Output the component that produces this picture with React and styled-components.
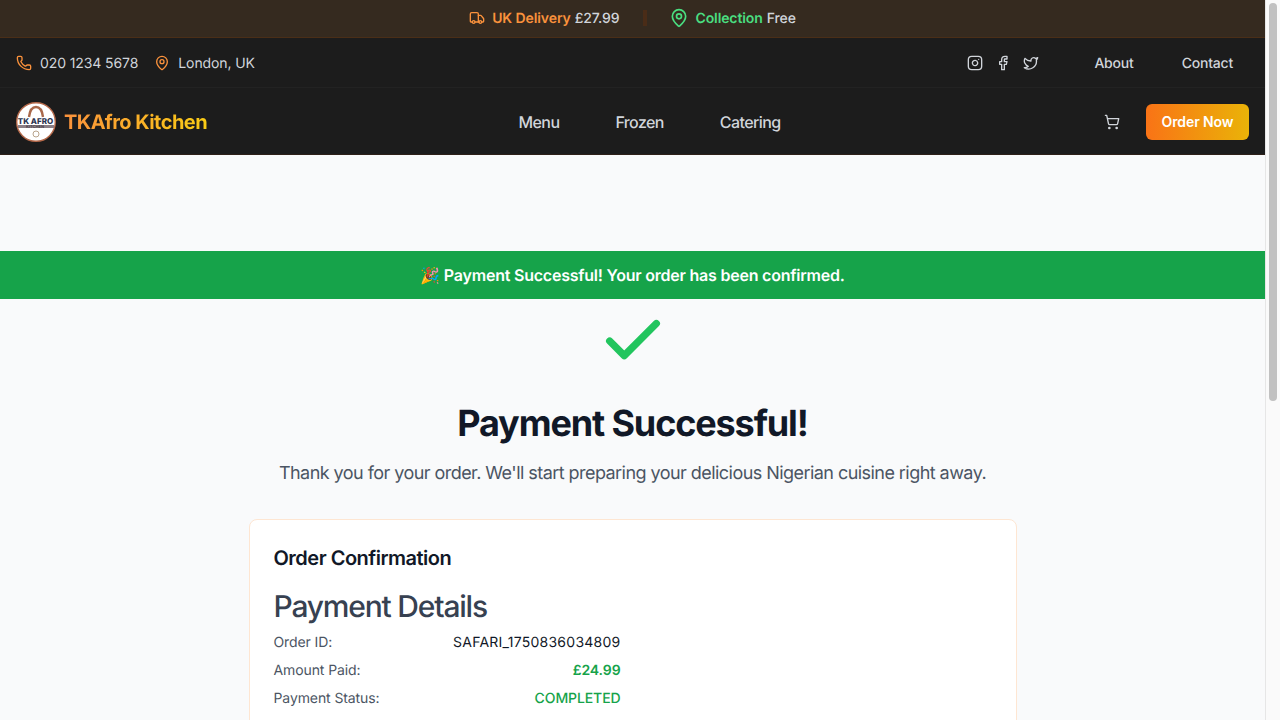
import React from "react";
import styled, { createGlobalStyle } from "styled-components";
import { Truck, MapPin, Phone, Instagram, Facebook, Twitter, ShoppingCart, Check } from "lucide-react";

const Global = createGlobalStyle`
  html, body { margin: 0; padding: 0; background: #f9fafb; }
  body { font-family: Inter, "Noto Sans", sans-serif; color: #111827; text-rendering: geometricPrecision; }
  * { box-sizing: border-box; }
`;

const Page = styled.div`width: 1265px; min-height: 1290px; display: flex; flex-direction: column;`;
const ScrollTrack = styled.div`
  position: fixed; top: 0; right: 0; bottom: 0; width: 15px; background: #fafafa; border-left: 1px solid #e6e6e6;
`;
const ScrollThumb = styled.div`
  position: absolute; top: 3px; left: 3px; width: 8px; height: 398px; border-radius: 4px; background: #c1c1c1;
`;
const PromoBar = styled.div`
  height: 38px; padding-bottom: 1px; display: flex; align-items: center; justify-content: center;
  background: #352a1f; border-bottom: 1px solid #4a2e17; font-size: 14px; letter-spacing: -0.1px; color: #d1d5db;
`;
const Promo = styled.div`display: flex; align-items: center; gap: ${p => p.$gap}px; font-weight: 500;`;
const PromoLabel = styled.strong`font-weight: 600; color: ${p => p.$c}; margin-right: 4px;`;
const PromoDivider = styled.span`width: 4px; height: 16px; margin: 0 22px 0 24px; background: #4a2c17;`;
const UtilityRow = styled.div`
  height: 50px; padding: 1px 16px 0; background: #1c1c1c; border-bottom: 1px solid #222;
  display: flex; align-items: center; justify-content: space-between;
  font-size: 14px; letter-spacing: -0.1px; color: #d1d5db; font-weight: 400;
`;
const Group = styled.div`display: flex; align-items: center; gap: ${p => p.$gap ?? 16}px;`;
const Item = styled.span`display: flex; align-items: center; gap: 8px;`;
const UtilLink = styled.a`padding: 0 16px; font-weight: 500; letter-spacing: -0.2px;`;
const Socials = styled(Group)`margin-right: 39px;`;
const NavRow = styled.nav`
  height: 67px; padding: 1px 16px 0; background: #1c1c1c; border-bottom: 1px solid #2e2018;
  display: flex; align-items: center; justify-content: space-between;
`;
const Brand = styled.div`display: flex; align-items: center; gap: 8px;`;
const Logo = styled.svg`width: 40px; height: 40px; display: block;`;
const BrandName = styled.span`
  font-size: 20px; font-weight: 700; letter-spacing: -0.55px; background: linear-gradient(90deg, #fb923c, #facc15);
  -webkit-background-clip: text; background-clip: text; color: transparent;
`;
const NavLinks = styled.div`display: flex; gap: 56px; margin-right: 4px;`;
const NavLink = styled.a`font-size: 16px; letter-spacing: -0.6px; font-weight: 500; color: #d1d5db;`;
const NavActions = styled.div`display: flex; align-items: center; gap: 18px;`;
const CartButton = styled.button`
  width: 32px; height: 32px; display: flex; align-items: center; justify-content: center;
  border: 0; background: none; color: #d1d5db; padding: 0;
`;
const OrderButton = styled.button`
  width: 103px; height: 36px; border: 0; border-radius: 6px; color: #fff; font: 600 14px Inter, sans-serif;
  letter-spacing: -0.1px; background: linear-gradient(90deg, #f97316, #eab308);
`;
const Main = styled.main`padding-top: 96px; display: flex; flex-direction: column; align-items: center;`;
const Banner = styled.div`
  align-self: stretch; height: 48px; background: #16a34a; color: #fff; font-size: 16px; letter-spacing: -0.22px; font-weight: 600;
  display: flex; align-items: center; justify-content: center;
`;
const CheckWrap = styled.div`margin-top: 7px; height: 70px; color: #22c55e; display: flex;`;
const Title = styled.h1`margin: 27px 0 0; font-size: 36px; line-height: 40px; letter-spacing: -1.13px; font-weight: 700; color: #111827;`;
const Subtitle = styled.p`margin: 17px 0 0; font-size: 18px; line-height: 28px; letter-spacing: -0.55px; color: #4b5563;`;
const Card = styled.section`
  width: 768px; margin-top: 31px; padding: 24px; background: #fff; border: 1px solid #fee6d2;
  border-radius: 8px; min-height: 620px;
`;
const CardTitle = styled.h3`margin: 0; font-size: 20px; line-height: 28px; letter-spacing: -0.5px; font-weight: 600; color: #111827;`;
const SectionTitle = styled.h2`margin: 15px 0 0; font-size: 30px; line-height: 40px; letter-spacing: -1.2px; font-weight: 500; color: #374151;`;
const Details = styled.div`width: 347px; margin-top: 1px;`;
const Row = styled.div`height: 28px; display: flex; align-items: center; justify-content: space-between; font-size: 14px; letter-spacing: -0.1px;`;
const Label = styled.span`color: #4b5563;`;
const Value = styled.span`color: ${p => p.$c || "#111827"}; font-weight: ${p => p.$w || 400}; letter-spacing: ${p => p.$ls ?? -0.1}px;`;

export default function App() {
  return (
    <Page>
      <Global />
      <PromoBar>
        <Promo $gap={7}><Truck size={16} color="#fb923c" /><span><PromoLabel $c="#fb923c">UK Delivery</PromoLabel>£27.99</span></Promo>
        <PromoDivider />
        <Promo $gap={6}><MapPin size={20} color="#4ade80" /><span><PromoLabel $c="#4ade80">Collection</PromoLabel>Free</span></Promo>
      </PromoBar>
      <UtilityRow>
        <Group>
          <Item><Phone size={16} color="#fb923c" />020 1234 5678</Item>
          <Item><MapPin size={16} color="#fb923c" />London, UK</Item>
        </Group>
        <Group $gap={0}>
          <Socials $gap={12}><Instagram size={16} /><Facebook size={16} /><Twitter size={16} /></Socials>
          <Group><UtilLink>About</UtilLink><UtilLink>Contact</UtilLink></Group>
        </Group>
      </UtilityRow>
      <NavRow>
        <Brand>
          <Logo viewBox="0 0 40 40">
            <circle cx="20" cy="20" r="19.3" fill="#fff" stroke="#b5694a" strokeWidth="1.4" />
            <path d="M13 15C14 7 17 5 20 5s6 2 7 10" fill="none" stroke="#a9684a" strokeWidth="2.4" />
            <rect x="2" y="23" width="36" height="3" fill="#8b7f86" />
            <text x="19.5" y="22" textAnchor="middle" fontFamily="Inter, sans-serif" fontSize="8" fontWeight="800" fill="#2b3450">TK AFRO</text>
            <text x="19" y="26" textAnchor="middle" fontFamily="Inter, sans-serif" fontSize="4" fontWeight="700" fill="#4c4450">KITCHEN</text>
            <circle cx="20" cy="32" r="3" fill="none" stroke="#b9a48c" />
          </Logo>
          <BrandName>TKAfro Kitchen</BrandName>
        </Brand>
        <NavLinks><NavLink>Menu</NavLink><NavLink>Frozen</NavLink><NavLink>Catering</NavLink></NavLinks>
        <NavActions>
          <CartButton aria-label="Cart"><ShoppingCart size={16} /></CartButton>
          <OrderButton>Order Now</OrderButton>
        </NavActions>
      </NavRow>
      <Main>
        <Banner>🎉 Payment Successful! Your order has been confirmed.</Banner>
        <CheckWrap><Check size={70} strokeWidth={2.5} /></CheckWrap>
        <Title>Payment Successful!</Title>
        <Subtitle>Thank you for your order. We'll start preparing your delicious Nigerian cuisine right away.</Subtitle>
        <Card>
          <CardTitle>Order Confirmation</CardTitle>
          <SectionTitle>Payment Details</SectionTitle>
          <Details>
            <Row><Label>Order ID:</Label><Value $ls={0.25}>SAFARI_1750836034809</Value></Row>
            <Row><Label>Amount Paid:</Label><Value $c="#16a34a" $w={600}>£24.99</Value></Row>
            <Row><Label>Payment Status:</Label><Value $c="#16a34a" $w={500}>COMPLETED</Value></Row>
          </Details>
        </Card>
      </Main>
      <ScrollTrack><ScrollThumb /></ScrollTrack>
    </Page>
  );
}
